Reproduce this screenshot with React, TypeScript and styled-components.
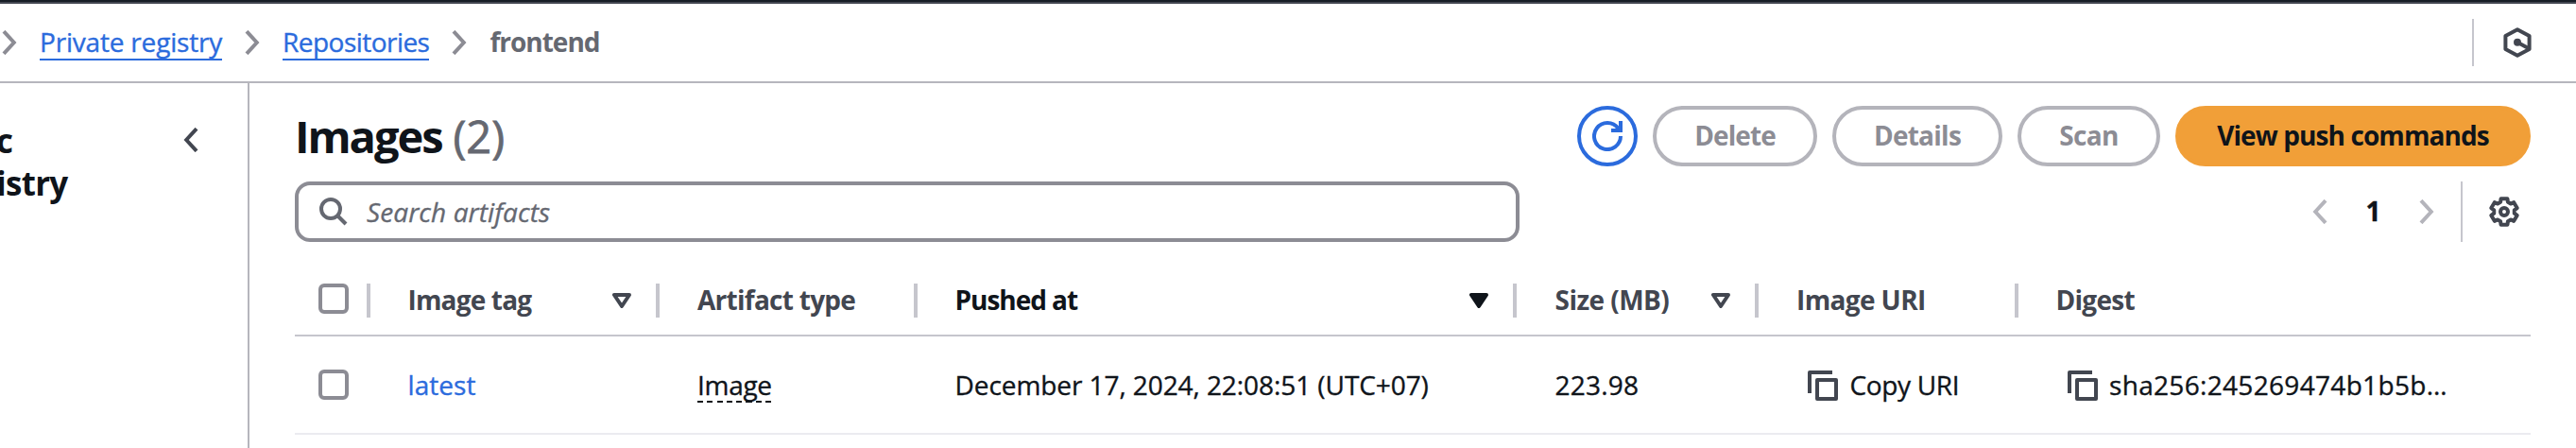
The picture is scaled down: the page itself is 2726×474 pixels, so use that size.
import React from "react";
import styled, { createGlobalStyle } from "styled-components";

const color = {
  link: "#2b6bdd",
  text: "#0f141a",
  heading: "#424650",
  muted: "#656871",
  control: "#8c8c94",
  disabled: "#b4b4bb",
  divider: "#c6c6cd",
  rowLine: "#ebebf0",
  primary: "#f19f38",
};

const GlobalStyle = createGlobalStyle`
  *, *::before, *::after { box-sizing: border-box; }
  body {
    margin: 0;
    background: #fff;
    color: ${color.text};
    font: 400 28px/40px "Open Sans", "Noto Sans", sans-serif;
    -webkit-text-stroke: 0.35px currentColor;
  }
  svg { display: block; flex: none; }
`;

const Page = styled.div`
  display: flex;
  flex-direction: column;
  height: 474px;
  overflow: hidden;
`;

const ConsoleBar = styled.div`
  flex: none;
  height: 4px;
  background: #161d26;
  border-bottom: 2px solid ${color.heading};
`;

const BreadcrumbBar = styled.header`
  flex: none;
  display: flex;
  align-items: center;
  justify-content: space-between;
  height: 84px;
  padding: 0 46px 0 2px;
  border-bottom: 2px solid #b6b6bd;
`;

const Breadcrumbs = styled.nav`
  display: flex;
  align-items: center;
  gap: 24px;
  line-height: 36px;
`;

const Tracked = styled.span<{ $track?: number }>`
  letter-spacing: ${(p) => p.$track ?? 0}px;
  white-space: nowrap;
`;

const Crumb = styled(Tracked).attrs({ as: "a" })`
  color: ${color.link};
  border-bottom: 2px solid ${color.link};
`;

const CurrentCrumb = styled(Tracked)`
  color: ${color.muted};
  font-weight: 700;
  -webkit-text-stroke: 0;
  padding-bottom: 2px;
`;

const BarTools = styled.div`
  display: flex;
  align-items: center;
  gap: 30px;
`;

const VerticalRule = styled.div<{ $height: number }>`
  width: 2px;
  height: ${(p) => p.$height}px;
  background: ${color.divider};
`;

const Body = styled.div`
  flex: 1;
  display: flex;
  min-height: 0;
`;

const Sidebar = styled.aside`
  flex: none;
  display: flex;
  justify-content: space-between;
  align-items: flex-start;
  width: 264px;
  padding: 38px 52px 0 0;
  border-right: 2px solid #b6b6bd;
  overflow: hidden;
`;

const SidebarTitle = styled.h2`
  margin: 0 0 0 -4px;
  font-size: 35px;
  line-height: 45px;
  font-weight: 700;
  letter-spacing: -0.7px;
  -webkit-text-stroke: 0;
`;

const CollapseButton = styled.div`
  padding-top: 9px;
`;

const Main = styled.main`
  flex: 1;
  padding: 24px 48px 0;
`;

const TitleRow = styled.div`
  display: flex;
  justify-content: space-between;
  height: 64px;
`;

const Title = styled.h1`
  display: flex;
  gap: 12px;
  margin: 0;
  font-size: 47px;
  line-height: 64px;
  font-weight: 700;
  letter-spacing: -2.05px;
  -webkit-text-stroke: 0;
`;

const Counter = styled.span`
  color: ${color.muted};
  font-weight: 400;
  letter-spacing: 0;
  -webkit-text-stroke: 0.8px currentColor;
`;

const Actions = styled.div`
  display: flex;
  gap: 16px;
`;

const Button = styled.button<{ $width: number; $track: number }>`
  width: ${(p) => p.$width}px;
  height: 64px;
  padding: 0 0 2px;
  border: 4px solid ${color.disabled};
  border-radius: 32px;
  background: #fff;
  color: ${color.control};
  font: inherit;
  font-weight: 700;
  -webkit-text-stroke: 0;
  letter-spacing: ${(p) => p.$track}px;
  white-space: nowrap;
`;

const PrimaryButton = styled(Button)`
  border-color: ${color.primary};
  background: ${color.primary};
  color: ${color.text};
`;

const RefreshButton = styled.button`
  display: flex;
  align-items: center;
  justify-content: center;
  width: 64px;
  height: 64px;
  padding: 0;
  border: 4px solid ${color.link};
  border-radius: 50%;
  background: #fff;
`;

const FilterRow = styled.div`
  display: flex;
  justify-content: space-between;
  height: 64px;
  margin-top: 16px;
`;

const SearchField = styled.div`
  display: flex;
  align-items: center;
  gap: 20px;
  width: 1296px;
  padding-left: 22px;
  border: 4px solid ${color.control};
  border-radius: 16px;
  color: ${color.muted};
  font-style: italic;
  letter-spacing: 0.09px;
`;

const Pagination = styled.div`
  display: flex;
  align-items: center;
  padding-right: 12px;
`;

const PageNumber = styled.span`
  width: 97px;
  padding-bottom: 2px;
  text-align: center;
  font-weight: 700;
`;

const PreferencesRule = styled(VerticalRule)`
  margin: 0 28px;
`;

const Table = styled.div`
  margin-top: 24px;
`;

const TableRow = styled.div<{ $head?: boolean }>`
  display: grid;
  grid-template-columns: 80px 306px 273px 634px 256px 275px 542px;
  align-items: center;
  height: ${(p) => (p.$head ? 76 : 104)}px;
  border-bottom: 2px solid ${(p) => (p.$head ? color.divider : color.rowLine)};
`;

const HeadCell = styled.div<{ $inset: number; $sorted?: boolean; $last?: boolean }>`
  display: flex;
  align-items: center;
  justify-content: space-between;
  height: 38px;
  padding-left: ${(p) => p.$inset}px;
  color: ${(p) => (p.$sorted ? color.text : color.heading)};
  font-weight: 700;
  -webkit-text-stroke: 0;

  &::after {
    content: "";
    display: ${(p) => (p.$last ? "none" : "block")};
    width: 4px;
    height: 36px;
    margin-top: 2px;
    background: ${color.divider};
  }
`;

const HeadLabel = styled(Tracked)`
  flex: 1;
`;

const SortMark = styled.span`
  padding: 2px 26px 0 0;
`;

const Cell = styled.div<{ $inset: number }>`
  display: flex;
  align-items: center;
  padding-left: ${(p) => p.$inset}px;
`;

const Checkbox = styled.span`
  width: 32px;
  height: 32px;
  border: 4px solid ${color.control};
  border-radius: 6px;
  background: #fff;
`;

const HeadCheckbox = styled(Checkbox)`
  margin-bottom: 2px;
`;

const TagLink = styled(Tracked).attrs({ as: "a" })`
  color: ${color.link};
`;

const DashedTerm = styled(Tracked)`
  margin-top: 2px;
  padding-bottom: 2px;
  line-height: 34px;
  background: repeating-linear-gradient(90deg, ${color.text} 0 6px, transparent 6px 10.3px) 0 100% / 100% 2px no-repeat;
`;

const CopyButton = styled.span<{ $gap: number }>`
  display: flex;
  align-items: center;
  gap: ${(p) => p.$gap}px;
`;

const CopyGlyph = styled.svg`
  margin-top: 2px;
`;

function Chevron({ stroke, left }: { stroke: string; left?: boolean }) {
  return (
    <svg width="16" height="26" viewBox="0 0 16 26" fill="none" stroke={stroke} strokeWidth="4">
      <path d={left ? "M14 1.2 3.2 13 14 24.8" : "M2 1.2 12.8 13 2 24.8"} />
    </svg>
  );
}

function HexIcon() {
  return (
    <svg width="32" height="32" viewBox="0 0 32 32" fill="none" stroke={color.heading} strokeWidth="4" strokeLinejoin="round">
      <path d="M16 2.2 28.6 9v14L16 29.8 3.4 23V9z" />
      <path d="M16 15.8 27.5 22" />
      <circle cx="16" cy="15.8" r="4" fill={color.heading} stroke="none" />
    </svg>
  );
}

function RefreshIcon() {
  return (
    <svg width="32" height="32" viewBox="0 0 32 32" fill="none" stroke={color.link} strokeWidth="4">
      <path d="M30 16A14 14 0 1 1 27.4 7.9L29 10" />
      <path d="M30 0v10H20" />
    </svg>
  );
}

function SearchIcon() {
  return (
    <svg width="30" height="30" viewBox="0 0 30 30" fill="none" stroke={color.muted} strokeWidth="4">
      <circle cx="12" cy="12" r="10" />
      <path d="M19 19l9 9" />
    </svg>
  );
}

const gearPoints = Array.from({ length: 6 }, (_, tooth) =>
  [
    [-21, 10.9],
    [-14, 14.2],
    [14, 14.2],
    [21, 10.9],
  ].map(([offset, radius]) => {
    const angle = ((tooth * 60 - 90 + offset) * Math.PI) / 180;
    return `${(16 + radius * Math.cos(angle)).toFixed(2)},${(16 + radius * Math.sin(angle)).toFixed(2)}`;
  }).join(" ")
).join(" ");

function GearIcon() {
  return (
    <svg width="32" height="32" viewBox="0 0 32 32" fill="none" stroke={color.heading} strokeWidth="4" strokeLinejoin="round">
      <polygon points={gearPoints} />
      <circle cx="16" cy="16" r="4" />
    </svg>
  );
}

function SortIcon({ active }: { active?: boolean }) {
  const tone = active ? color.text : color.heading;
  return (
    <svg width="20" height="16" viewBox="0 0 20 16" fill={active ? tone : "none"} stroke={tone} strokeWidth="4" strokeLinejoin="round">
      <path d="M2 2h16l-8 12z" />
    </svg>
  );
}

function CopyIcon() {
  return (
    <CopyGlyph width="32" height="32" viewBox="0 0 32 32" fill="none" stroke={color.heading} strokeWidth="4" strokeLinejoin="round">
      <path d="M2 24V2h24" />
      <path d="M10 10h20v20H10z" />
    </CopyGlyph>
  );
}

const columns = [
  { label: "Image tag", inset: 39.5, track: -0.83, sort: "idle" },
  { label: "Artifact type", inset: 40, track: -0.73 },
  { label: "Pushed at", inset: 39.5, track: -1.04, sort: "active" },
  { label: "Size (MB)", inset: 40.5, track: -0.54, sort: "idle" },
  { label: "Image URI", inset: 40, track: -0.62 },
  { label: "Digest", inset: 39.5, track: -0.71 },
];

export default function App() {
  return (
    <Page>
      <GlobalStyle />
      <ConsoleBar />
      <BreadcrumbBar>
        <Breadcrumbs>
          <Chevron stroke={color.control} />
          <Crumb $track={-0.19}>Private registry</Crumb>
          <Chevron stroke={color.control} />
          <Crumb $track={-0.54}>Repositories</Crumb>
          <Chevron stroke={color.control} />
          <CurrentCrumb $track={-1}>frontend</CurrentCrumb>
        </Breadcrumbs>
        <BarTools>
          <VerticalRule $height={50} />
          <HexIcon />
        </BarTools>
      </BreadcrumbBar>
      <Body>
        <Sidebar>
          <SidebarTitle>
            c<br />
            istry
          </SidebarTitle>
          <CollapseButton>
            <Chevron stroke={color.heading} left />
          </CollapseButton>
        </Sidebar>
        <Main>
          <TitleRow>
            <Title>
              Images <Counter>(2)</Counter>
            </Title>
            <Actions>
              <RefreshButton>
                <RefreshIcon />
              </RefreshButton>
              <Button $width={174} $track={-0.9}>Delete</Button>
              <Button $width={180} $track={-0.74}>Details</Button>
              <Button $width={151} $track={-0.71}>Scan</Button>
              <PrimaryButton $width={376} $track={-0.9}>View push commands</PrimaryButton>
            </Actions>
          </TitleRow>
          <FilterRow>
            <SearchField>
              <SearchIcon />
              <span>Search artifacts</span>
            </SearchField>
            <Pagination>
              <Chevron stroke={color.disabled} left />
              <PageNumber>1</PageNumber>
              <Chevron stroke={color.disabled} />
              <PreferencesRule $height={64} />
              <GearIcon />
            </Pagination>
          </FilterRow>
          <Table>
            <TableRow $head>
              <HeadCell $inset={25}>
                <HeadCheckbox />
              </HeadCell>
              {columns.map((c, i) => (
                <HeadCell key={c.label} $inset={c.inset} $sorted={c.sort === "active"} $last={i === columns.length - 1}>
                  <HeadLabel $track={c.track}>{c.label}</HeadLabel>
                  {c.sort && (
                    <SortMark>
                      <SortIcon active={c.sort === "active"} />
                    </SortMark>
                  )}
                </HeadCell>
              ))}
            </TableRow>
            <TableRow>
              <Cell $inset={25}>
                <Checkbox />
              </Cell>
              <Cell $inset={39.5}>
                <TagLink $track={0.07}>latest</TagLink>
              </Cell>
              <Cell $inset={40}>
                <DashedTerm $track={-0.3}>Image</DashedTerm>
              </Cell>
              <Cell $inset={39.5}>
                <Tracked $track={-0.07}>December 17, 2024, 22:08:51 (UTC+07)</Tracked>
              </Cell>
              <Cell $inset={40.5}>
                <Tracked $track={0.2}>223.98</Tracked>
              </Cell>
              <Cell $inset={52}>
                <CopyButton $gap={12.5}>
                  <CopyIcon />
                  <Tracked $track={-0.33}>Copy URI</Tracked>
                </CopyButton>
              </Cell>
              <Cell $inset={52}>
                <CopyButton $gap={12}>
                  <CopyIcon />
                  <Tracked $track={0.32}>sha256:245269474b1b5b…</Tracked>
                </CopyButton>
              </Cell>
            </TableRow>
          </Table>
        </Main>
      </Body>
    </Page>
  );
}
